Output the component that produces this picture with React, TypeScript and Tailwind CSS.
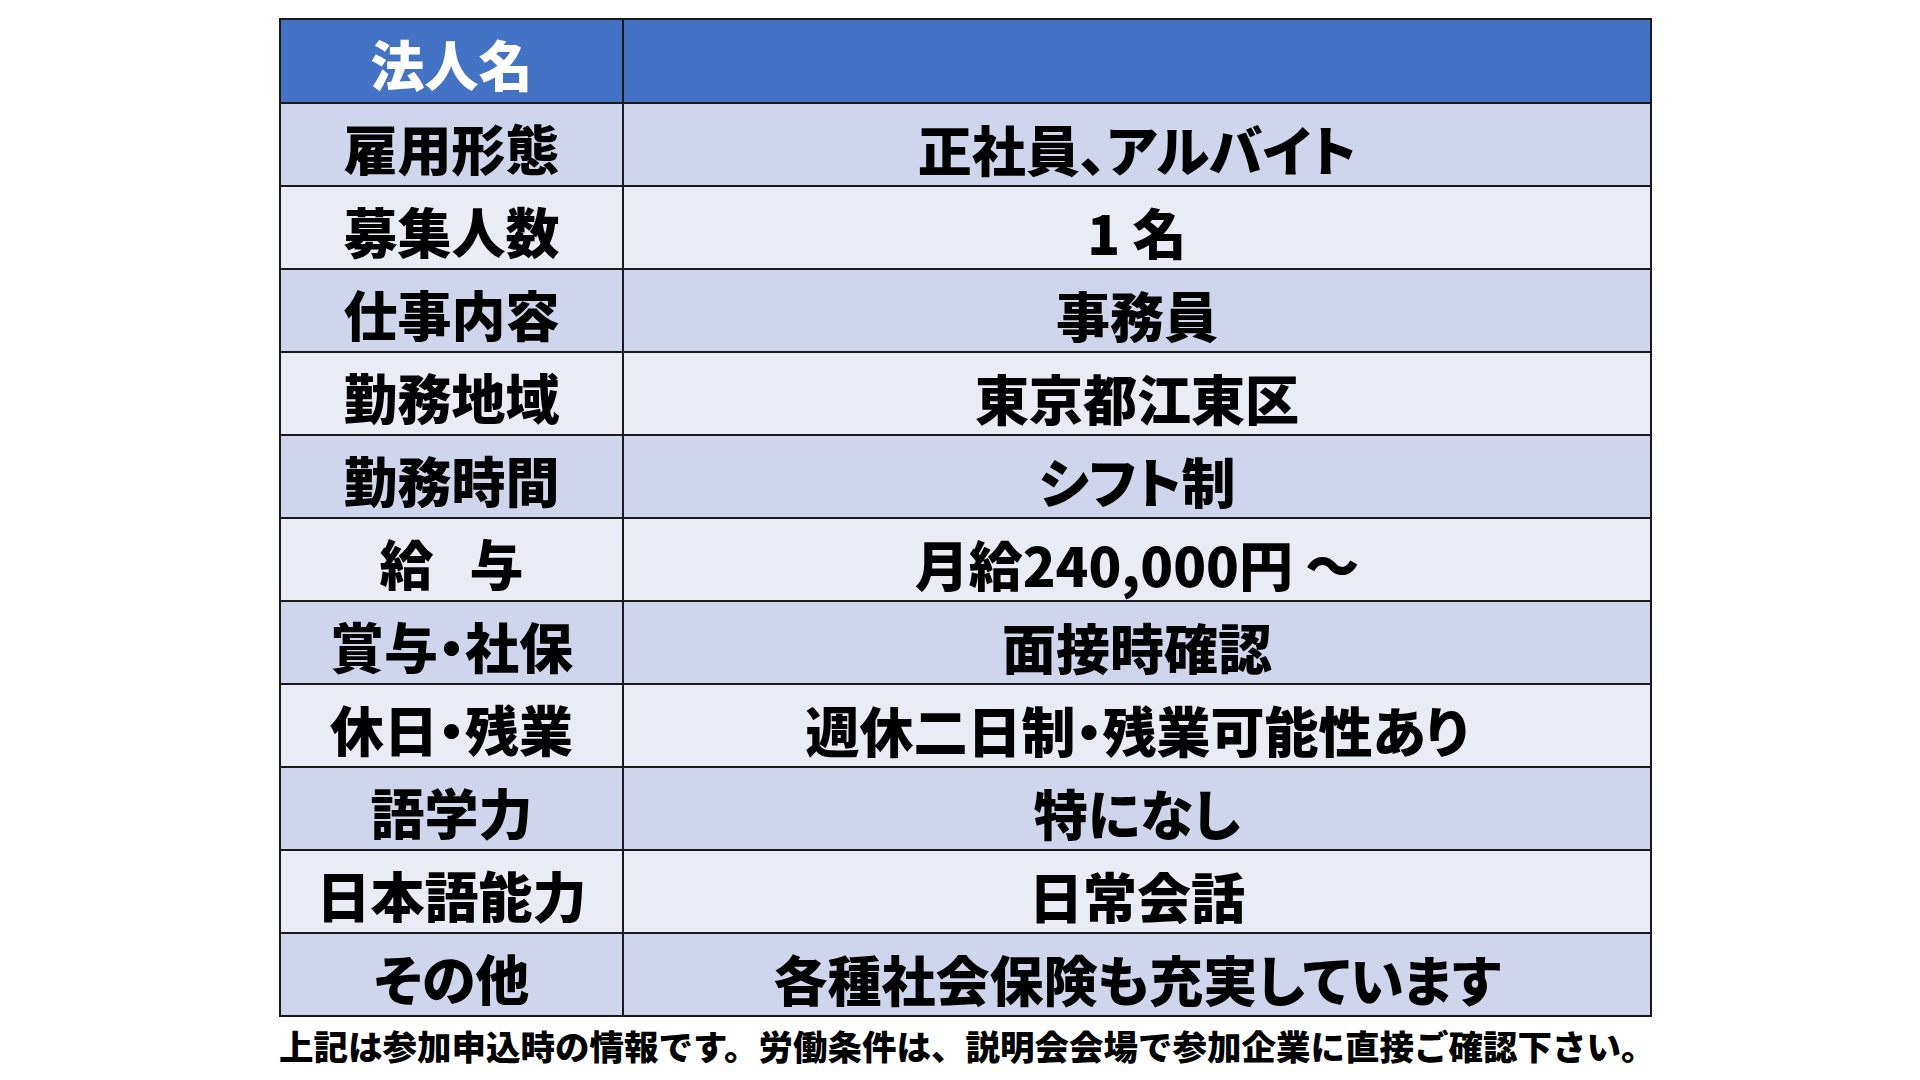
import React from 'react';

interface Row {
  label: React.ReactNode;
  value: string;
}

// 募集要項の各行
const rows: Row[] = [
  { label: '雇用形態', value: '正社員、アルバイト' },
  { label: '募集人数', value: '1 名' },
  { label: '仕事内容', value: '事務員' },
  { label: '勤務地域', value: '東京都江東区' },
  { label: '勤務時間', value: 'シフト制' },
  {
    label: (
      <>
        給<span className="inline-block w-[36px]" />与
      </>
    ),
    value: '月給240,000円 ～',
  },
  { label: '賞与・社保', value: '面接時確認' },
  { label: '休日・残業', value: '週休二日制・残業可能性あり' },
  { label: '語学力', value: '特になし' },
  { label: '日本語能力', value: '日常会話' },
  { label: 'その他', value: '各種社会保険も充実しています' },
];

const font = "font-['Noto_Sans_CJK_JP','Noto_Sans',sans-serif]";

const App: React.FC = () => {
  return (
    <div className={`w-[1920px] h-[1080px] bg-white pl-[279px] pt-[18px] ${font}`}>
      <table className="w-[1373px] border-collapse border-2 border-[#1a1a1a] table-fixed [font-feature-settings:'palt']">
        <colgroup>
          <col className="w-[343px]" />
          <col />
        </colgroup>
        <tbody>
          <tr className="h-[84px] bg-[#4472c4]">
            <td className="border-2 border-[#1a1a1a] text-center text-white text-[54px] font-black leading-none pt-[6px]">
              法人名
            </td>
            <td className="border-2 border-[#1a1a1a]" />
          </tr>
          {rows.map((row, i) => (
            <tr key={i} className={`h-[83px] ${i % 2 === 0 ? 'bg-[#cfd5ea]' : 'bg-[#e9ebf5]'}`}>
              <td className="border-2 border-[#1a1a1a] text-center text-black text-[54px] font-black leading-none pt-[6px] whitespace-nowrap">
                {row.label}
              </td>
              <td className="border-2 border-[#1a1a1a] text-center text-black text-[54px] font-black leading-none pt-[8px] whitespace-nowrap">
                {row.value}
              </td>
            </tr>
          ))}
        </tbody>
      </table>
      <p className="mt-[11px] text-[34.5px] font-black leading-none text-black whitespace-nowrap">
        上記は参加申込時の情報です。労働条件は、説明会会場で参加企業に直接ご確認下さい。
      </p>
    </div>
  );
};

export default App;
